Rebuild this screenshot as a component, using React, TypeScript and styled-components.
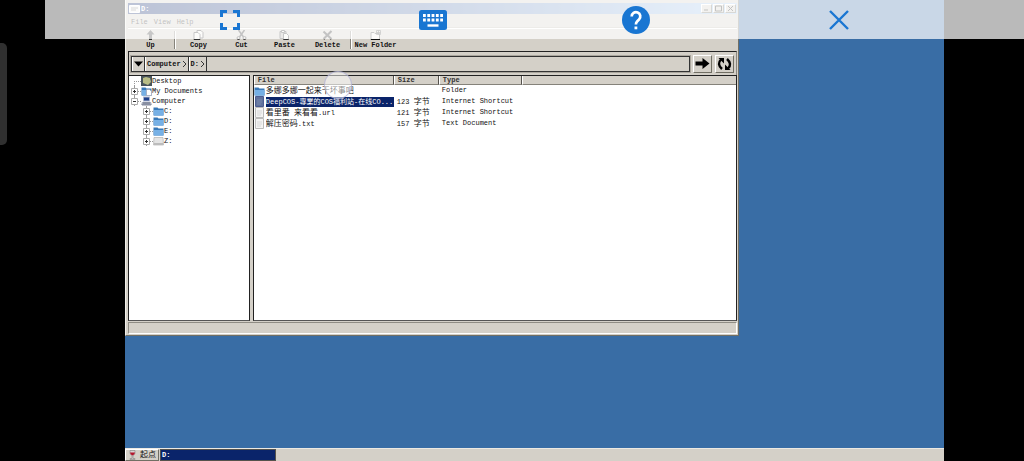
import React from 'react';
import styled, { createGlobalStyle, css } from 'styled-components';

const face = '#d4d0c8';
const blue = '#1976d2';

const GlobalStyle = createGlobalStyle`
  * { box-sizing: border-box; }
  body { margin: 0; background: #000; }
  body, button, input, table {
    font-family: "Liberation Mono", "Noto Sans CJK SC", monospace;
    font-size: 7px;
    line-height: 10px;
    color: #111;
  }
  button { border: 0; padding: 0; background: none; white-space: nowrap; }
  svg { display: block; flex: none; }
`;

const raised = css`
  border: 1px solid;
  border-color: #fff #716f64 #716f64 #fff;
`;

const Screen = styled.div`
  position: relative;
  min-height: 100vh;
  padding: 0 80px 0 125px;
  display: flex;
`;

const Desktop = styled.main`
  flex: 1;
  display: flex;
  flex-direction: column;
  justify-content: space-between;
  background: #396da5;
`;

const Window = styled.section`
  width: 75%;
  padding: 3px 1px 1px 2px;
  display: flex;
  flex-direction: column;
  background: ${face};
  border-right: 1px solid #716f64;
  border-bottom: 1px solid #716f64;
  border-left: 1px solid #f0eee8;
`;

const TitleBar = styled.header`
  height: 11px;
  padding: 0 1px;
  display: flex;
  align-items: center;
  gap: 1px;
  background: linear-gradient(90deg, #0a246a, #a6caf0);
  color: #fff;
  font-weight: bold;
`;

const TitleText = styled.span`
  flex: 1;
`;

const CaptionButtons = styled.div`
  display: flex;
  gap: 1px;
`;

const CaptionButton = styled.button`
  ${raised}
  width: 11px;
  height: 9px;
  display: grid;
  place-items: center;
  background: ${face};
`;

const MenuBar = styled.nav`
  height: 14px;
  padding: 2px 3px 0;
  display: flex;
  align-items: center;
  gap: 6px;
  border-bottom: 1px solid #bbb7ae;
`;

const ToolBar = styled.div`
  height: 23px;
  display: flex;
  border-top: 1px solid #fff;
`;

const ToolButton = styled.button<{ $wide?: boolean }>`
  width: ${(p) => (p.$wide ? 45 : 43)}px;
  padding-top: 1px;
  display: flex;
  flex-direction: column;
  align-items: center;
  font-weight: bold;
`;

const ToolSeparator = styled.span`
  width: 2px;
  margin: 2px 1px;
  border-left: 1px solid #86837b;
  border-right: 1px solid #fff;
`;

const AddressBar = styled.form`
  height: 24px;
  padding: 2px;
  display: flex;
  align-items: center;
  gap: 3px;
  border: 1px solid #222;
  border-bottom: 0;
  border-right-color: #8a877f;
`;

const AddressBox = styled.div`
  flex: 1;
  height: 16px;
  display: flex;
  border: 1px solid #333;
  outline: 1px solid #aaa69d;
`;

const Crumb = styled.button`
  padding: 0 1px;
  display: flex;
  align-items: center;
  gap: 1px;
  border-right: 1px solid #333;
  border-left: 1px solid #fff;
  font-weight: bold;
`;

const PathInput = styled.input`
  flex: 1;
  min-width: 0;
  border: 0;
  padding: 0 4px;
  background: transparent;
`;

const GoButton = styled.button`
  ${raised}
  width: 19px;
  height: 18px;
  display: grid;
  place-items: center;
  background: ${face};
`;

const Panes = styled.div`
  min-height: 246px;
  display: flex;
  gap: 3px;
`;

const pane = css`
  background: #fff;
  border: 1px solid #222;
  border-bottom-color: #555;
`;

const TreePane = styled.aside`
  ${pane}
  width: 20%;
`;

const ListPane = styled.div`
  ${pane}
  flex: 1;
`;

const Tree = styled.ul`
  margin: 0;
  padding: 0;
  list-style: none;
`;

const TreeRow = styled.li<{ $depth: number }>`
  height: 10px;
  padding-left: ${(p) => 2 + p.$depth * 12}px;
  display: flex;
  align-items: center;
`;

const TreeGuide = styled.span<{ $first?: boolean }>`
  position: relative;
  width: 10px;
  height: 10px;
  display: flex;
  align-items: center;
  &::before {
    content: '';
    position: absolute;
    left: 3px;
    top: ${(p) => (p.$first ? 5 : 0)}px;
    bottom: 0;
    border-left: 1px dotted #999;
  }
  &::after {
    content: '';
    position: absolute;
    left: 3px;
    right: 0;
    top: 5px;
    border-top: 1px dotted #999;
  }
`;

const Expander = styled.button`
  position: relative;
  z-index: 1;
  width: 7px;
  height: 7px;
`;

const FileTable = styled.table`
  width: 100%;
  table-layout: fixed;
  border-collapse: separate;
  border-spacing: 0;
`;

const HeadCell = styled.th<{ $width?: number }>`
  ${(p) => p.$width && `width: ${p.$width}px;`}
  height: 9px;
  padding: 0 3px;
  background: ${face};
  border-right: 1px solid #55524c;
  border-bottom: 1px solid #85827a;
  border-left: 1px solid #fff;
  line-height: 8px;
  text-align: left;
  font-weight: bold;
  color: #333;
  &:last-child { border-right: 0; }
`;

const Cell = styled.td`
  height: 11px;
  padding: 0 3px;
  line-height: 11px;
  white-space: nowrap;
`;

const NameCell = styled(Cell)`
  padding: 0;
`;

const CellLine = styled.div`
  height: 11px;
  display: flex;
  align-items: center;
  gap: 1px;
`;

const FileLabel = styled.span<{ $selected?: boolean; $large?: boolean }>`
  height: 10px;
  line-height: 10px;
  overflow: hidden;
  ${(p) => p.$large && 'font-size: 8px;'}
  ${(p) => p.$selected && 'flex: 1; background: #0a246a; color: #fff;'}
`;

const Cjk = styled.span`
  font-size: 8px;
`;

const StatusBar = styled.footer`
  height: 12px;
  margin-top: 1px;
  border: 1px solid;
  border-color: #8f8c84 #fff #fff #8f8c84;
`;

const TaskBar = styled.footer`
  height: 13px;
  display: flex;
  gap: 1px;
  background: ${face};
  border-top: 1px solid #ece9e2;
`;

const StartButton = styled.button`
  ${raised}
  width: 34px;
  padding-left: 3px;
  display: flex;
  align-items: center;
  gap: 4px;
  font-size: 8px;
`;

const TaskButton = styled.button`
  width: 116px;
  padding-left: 1px;
  background: #0a246a;
  border: 1px solid #55524c;
  color: #fff;
  text-align: left;
  font-weight: bold;
`;

const ControlStrip = styled.div`
  position: absolute;
  top: 0;
  right: 0;
  left: 45px;
  height: 39px;
  display: flex;
  align-items: center;
  justify-content: space-evenly;
  background: rgba(255, 255, 255, 0.73);
`;

const ControlButton = styled.button`
  width: 36px;
  height: 36px;
  display: grid;
  place-items: center;
  color: ${blue};
`;

const EdgeHandle = styled.div`
  position: absolute;
  top: 43px;
  left: 0;
  width: 7px;
  height: 102px;
  background: #303030;
  border-radius: 0 5px 5px 0;
`;

const TouchPointer = styled.div`
  position: absolute;
  top: 71px;
  left: 324px;
  width: 28px;
  height: 28px;
  border: 1px solid rgba(160, 160, 205, 0.6);
  border-radius: 50%;
  background: rgba(255, 255, 255, 0.5);
`;

const FolderIcon = ({ documents }: { documents?: boolean }) => (
  <svg width="11" height="10" viewBox="0 0 11 10">
    <path d="M0.5 1.5h4l1 1h5v7h-10z" fill="#3979b8" />
    <path d="M1 4h9.5v5.5H1z" fill="#76b0e5" />
    {documents && <path d="M5.5 3.5h3l2 2v4h-5z" fill="#fff" stroke="#99a" strokeWidth=".6" />}
  </svg>
);

const DesktopIcon = () => (
  <svg width="11" height="10" viewBox="0 0 11 10">
    <path d="M0 0h11v10H0z" fill="#49545b" />
    <path d="M2 2l3-1 4 1 1 4-3 3-5-2z" fill="#b9bd86" />
  </svg>
);

const ComputerIcon = () => (
  <svg width="11" height="10" viewBox="0 0 11 10">
    <path d="M2 .5h7v5H2z" fill="#aab5cf" />
    <path d="M3 1.5h5v3H3z" fill="#20418b" />
    <path d="M1 6h9l1 3H0z" fill="#a9afbd" />
    <path d="M2 7h7M1 9h9" stroke="#4a5570" strokeWidth=".7" />
  </svg>
);

const DriveIcon = () => (
  <svg width="11" height="10" viewBox="0 0 11 10">
    <path d="M1 1.5h9l.5 7.5H.5z" fill="#e4e4e4" stroke="#aaa" strokeWidth=".6" />
    <path d="M1 7h9v2H1z" fill="#bcbcbc" />
  </svg>
);

const PageIcon = ({ selected }: { selected?: boolean }) => (
  <svg width="11" height="11" viewBox="0 0 11 11">
    <path d="M1.5.5h8v10h-8z" fill={selected ? '#61729d' : '#f3f3f3'} stroke={selected ? '#4c5d92' : '#bbb'} />
    <path d="M3 4h5M3 6h5M3 8h4" stroke={selected ? '#8292b5' : '#ccc'} strokeWidth=".7" />
  </svg>
);

const toolIcons: Record<string, React.ReactNode> = {
  Up: <path d="M5.5 0L9.5 4.5H7V10H4V4.5H1.5z" fill="#333" />,
  Copy: (
    <g fill="#f4f2ed" stroke="#333">
      <path d="M4 .5h4l2 2V8H4z" />
      <path d="M1 2.5h4l2 2v5H1z" />
    </g>
  ),
  Cut: (
    <g fill="none" stroke="#222">
      <path d="M2.5 0l5 7M8.5 0l-5 7" strokeWidth="1.5" />
      <circle cx="2.5" cy="8" r="1.5" />
      <circle cx="8.5" cy="8" r="1.5" />
    </g>
  ),
  Paste: (
    <g fill="#f4f2ed" stroke="#333">
      <path d="M1 1.5h6v7H1z" fill="#b4b1aa" />
      <path d="M2.5 .5h3v2h-3z" />
      <path d="M4.5 3.5h3l2 2v4h-5z" />
    </g>
  ),
  Delete: <path d="M1.5 1.5l8 7.5M9.5 1L1.5 9" stroke="#222" strokeWidth="2.1" />,
  'New Folder': (
    <g fill="none" stroke="#444">
      <path d="M1 2.5h3l1 1h4.5v6H1z" fill="#efede8" />
      <path d="M1 9.5h9" stroke="#111" />
      <path d="M6.5 .5h4v4h-4zM8.5 .5v4M6.5 2.5h4" strokeWidth=".8" />
    </g>
  ),
};

const Tool = ({ name, wide }: { name: string; wide?: boolean }) => (
  <ToolButton $wide={wide}>
    <svg width="11" height="10" viewBox="0 0 11 10">{toolIcons[name]}</svg>
    {name}
  </ToolButton>
);

const Chevron = () => (
  <svg width="5" height="8" viewBox="0 0 5 8">
    <path d="M1 1l3 3-3 3" fill="none" stroke="#333" />
  </svg>
);

type Node = { name: string; depth: number; icon: React.ReactNode; open?: boolean; leaf?: boolean };

const tree: Node[] = [
  { name: 'Desktop', depth: 0, icon: <DesktopIcon />, leaf: true },
  { name: 'My Documents', depth: 0, icon: <FolderIcon documents /> },
  { name: 'Computer', depth: 0, icon: <ComputerIcon />, open: true },
  { name: 'C:', depth: 1, icon: <FolderIcon /> },
  { name: 'D:', depth: 1, icon: <FolderIcon /> },
  { name: 'E:', depth: 1, icon: <FolderIcon /> },
  { name: 'Z:', depth: 1, icon: <DriveIcon /> },
];

type Entry = { name: React.ReactNode; size?: string; type: string; folder?: boolean; selected?: boolean; large?: boolean };

const files: Entry[] = [
  { name: '多娜多娜一起来干坏事吧', type: 'Folder', folder: true, large: true },
  { name: 'DeepCOS-專業的COS福利站-在线CO...', size: '123', type: 'Internet Shortcut', selected: true },
  { name: <><Cjk>看里番</Cjk> <Cjk>来看看</Cjk>.url</>, size: '121', type: 'Internet Shortcut' },
  { name: <><Cjk>解压密码</Cjk>.txt</>, size: '157', type: 'Text Document' },
];

const captions = [
  { label: 'Minimize', path: 'M1 5h4' },
  { label: 'Maximize', path: 'M.5 1h6v5h-6z' },
  { label: 'Close', path: 'M1 1l5 5M6 1l-5 5' },
];

export default function App() {
  return (
    <Screen>
      <GlobalStyle />
      <Desktop>
        <Window aria-label="D:">
          <TitleBar>
            <svg width="11" height="9" viewBox="0 0 11 9">
              <path d="M.5 1.5h10v7H.5z" fill="#eee" stroke="#fff" />
              <path d="M2 4h7M2 6h5" stroke="#777" />
            </svg>
            <TitleText>D:</TitleText>
            <CaptionButtons>
              {captions.map((c) => (
                <CaptionButton key={c.label} aria-label={c.label}>
                  <svg width="7" height="7" viewBox="0 0 7 7">
                    <path d={c.path} fill="none" stroke="#222" />
                  </svg>
                </CaptionButton>
              ))}
            </CaptionButtons>
          </TitleBar>
          <MenuBar>
            {['File', 'View', 'Help'].map((m) => <button key={m}>{m}</button>)}
          </MenuBar>
          <ToolBar>
            <Tool name="Up" wide />
            <ToolSeparator />
            <Tool name="Copy" />
            <Tool name="Cut" />
            <Tool name="Paste" />
            <Tool name="Delete" />
            <ToolSeparator />
            <Tool name="New Folder" wide />
          </ToolBar>
          <AddressBar>
            <AddressBox>
              <Crumb type="button" aria-label="Locations">
                <svg width="9" height="6" viewBox="0 0 9 6"><path d="M0 .5h9L4.5 5.5z" fill="#000" /></svg>
              </Crumb>
              <Crumb type="button">Computer<Chevron /></Crumb>
              <Crumb type="button">D:<Chevron /></Crumb>
              <PathInput aria-label="Path" />
            </AddressBox>
            <GoButton type="button" aria-label="Go">
              <svg width="15" height="13" viewBox="0 0 15 13">
                <path d="M.5 4.5h7V1l7 5.5-7 5.5V8.5h-7z" fill="#000" />
              </svg>
            </GoButton>
            <GoButton type="button" aria-label="Refresh">
              <svg width="15" height="14" viewBox="0 0 15 14">
                <path d="M5 12Q-.5 7 4 2.500M10 2Q15.500 7 11 11.500" fill="none" stroke="#000" strokeWidth="2.400" />
                <path d="M1.500 1H7v5.500zM13.500 13H8V7.500z" fill="#000" />
              </svg>
            </GoButton>
          </AddressBar>
          <Panes>
            <TreePane>
              <Tree>
                {tree.map((n, i) => (
                  <TreeRow key={n.name} $depth={n.depth}>
                    <TreeGuide $first={i === 0}>
                      {!n.leaf && (
                        <Expander aria-label={`${n.open ? 'Collapse' : 'Expand'} ${n.name}`}>
                          <svg width="7" height="7" viewBox="0 0 7 7">
                            <path d="M.5.5h6v6h-6z" fill="#fff" stroke="#aaa" />
                            <path d={n.open ? 'M2 3.5h3' : 'M2 3.5h3M3.5 2v3'} stroke="#333" />
                          </svg>
                        </Expander>
                      )}
                    </TreeGuide>
                    {n.icon}
                    <span>{n.name}</span>
                  </TreeRow>
                ))}
              </Tree>
            </TreePane>
            <ListPane>
              <FileTable>
                <thead>
                  <tr>
                    <HeadCell $width={140}>File</HeadCell>
                    <HeadCell $width={45}>Size</HeadCell>
                    <HeadCell $width={83}>Type</HeadCell>
                    <HeadCell aria-label="Blank" />
                  </tr>
                </thead>
                <tbody>
                  {files.map((f, i) => (
                    <tr key={i}>
                      <NameCell>
                        <CellLine>
                          {f.folder ? <FolderIcon /> : <PageIcon selected={f.selected} />}
                          <FileLabel $selected={f.selected} $large={f.large}>{f.name}</FileLabel>
                        </CellLine>
                      </NameCell>
                      <Cell>
                        {f.size && <CellLine><span>{f.size} <Cjk>字节</Cjk></span></CellLine>}
                      </Cell>
                      <Cell>{f.type}</Cell>
                      <Cell />
                    </tr>
                  ))}
                </tbody>
              </FileTable>
            </ListPane>
          </Panes>
          <StatusBar />
        </Window>
        <TaskBar>
          <StartButton>
            <svg width="7" height="10" viewBox="0 0 7 10">
              <path d="M1 .5h5q1 4-2 5v3h2v1H1v-1h2v-3Q0 4.5 1 .5z" fill="#d8d2d2" stroke="#777" strokeWidth=".5" />
              <path d="M1 2.5h5q0 2-2.5 3Q1 4.500 1 2.500z" fill="#b3162c" />
            </svg>
            起点
          </StartButton>
          <TaskButton>D:</TaskButton>
        </TaskBar>
      </Desktop>
      <TouchPointer />
      <EdgeHandle />
      <ControlStrip>
        <ControlButton aria-label="Full screen">
          <svg width="22" height="20" viewBox="0 0 22 20">
            <path d="M2.5 7V1.5H8M14 1.5h5.5V7M19.5 13v5.5H14M8 18.5H2.5V13" fill="none" stroke="currentColor" strokeWidth="3" />
          </svg>
        </ControlButton>
        <ControlButton aria-label="Keyboard">
          <svg width="28" height="20" viewBox="0 0 28 20">
            <rect width="28" height="20" rx="2.5" fill="currentColor" />
            <path d="M4 5.5h20M4 10h20" stroke="#fff" strokeWidth="2.8" strokeDasharray="2.8 1.5" />
            <path d="M8.5 15.5h11" stroke="#fff" strokeWidth="2.4" />
          </svg>
        </ControlButton>
        <ControlButton aria-label="Help">
          <svg width="28" height="28" viewBox="0 0 28 28">
            <circle cx="14" cy="14" r="14" fill="currentColor" />
            <path d="M9.7 10.500a4.300 4.300 0 1 1 7.300 3l-1.700 1.700q-1.400 1.400-1.400 3.300" fill="none" stroke="#fff" strokeWidth="2.7" />
            <path d="M12.5 20.500h2.800v2.800h-2.800z" fill="#fff" />
          </svg>
        </ControlButton>
        <ControlButton aria-label="Close session">
          <svg width="20" height="20" viewBox="0 0 20 20">
            <path d="M1 1l18 18M19 1L1 19" stroke="currentColor" strokeWidth="2.4" />
          </svg>
        </ControlButton>
      </ControlStrip>
    </Screen>
  );
}
